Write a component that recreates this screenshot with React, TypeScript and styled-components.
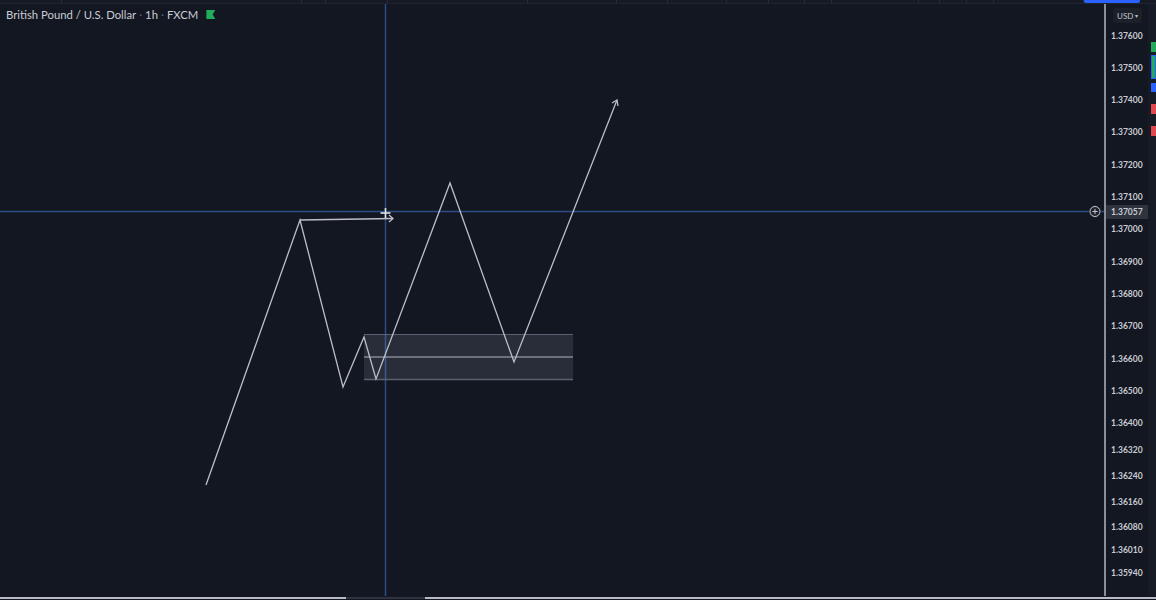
import { createGlobalStyle, styled } from "styled-components"

const Global = createGlobalStyle`
    html, body {
        margin: 0;
        padding: 0;
        background: #131722;
        overflow: hidden;
    }
    * { box-sizing: border-box; }
`

const Screen = styled.div`
    width: 1156px;
    height: 600px;
    display: grid;
    grid-template-rows: 4px 1fr 4px;
    background: #131722;
    font-family: Lato, "Liberation Sans", sans-serif;
    color: #d1d4dc;
`

const TopStrip = styled.div`
    display: flex;
    background: #161a25;
    border-bottom: 1px solid #1f2430;
`

const TopCell = styled.div<{ $w: number }>`
    width: ${p => p.$w}px;
    border-right: 1px solid #262b37;
`

const TopActive = styled.div`
    width: 56px;
    background: #2962ff;
    border-radius: 0 0 2px 2px;
`

const Body = styled.div`
    display: grid;
    grid-template-columns: 1104px 44px 8px;
    min-height: 0;
`

const Pane = styled.div`
    position: relative;
    overflow: hidden;
`

const Legend = styled.div`
    position: absolute;
    left: 6px;
    top: 4px;
    display: flex;
    align-items: center;
    gap: 3px;
    font-size: 11.3px;
    color: #c9ccd4;
`

const Dot = styled.span`
    color: #5d6272;
`

const Flag = styled.span`
    width: 9px;
    height: 9px;
    margin-left: 5px;
    background: #22ab5a;
    clip-path: polygon(0 0, 100% 0, 70% 50%, 100% 100%, 0 100%);
`

const Axis = styled.div`
    position: relative;
    border-left: 2px solid #8a8e97;
    background: #131722;
`

const CurrencyButton = styled.div`
    position: absolute;
    top: 4px;
    left: 7px;
    height: 15px;
    padding: 0 4px;
    display: flex;
    align-items: center;
    gap: 2px;
    border-radius: 3px;
    background: #1c2029;
    font-size: 8px;
    color: #c0c3cb;
`

const Tick = styled.div<{ $active?: boolean }>`
    position: absolute;
    left: 0;
    right: 0;
    height: 14px;
    display: flex;
    align-items: center;
    padding-left: 5px;
    font-size: 8.5px;
    font-weight: 700;
    color: #c8cbd3;
    background: ${p => (p.$active ? "#2f333e" : "transparent")};
`

const Side = styled.div`
    position: relative;
    background: #171b26;
`

const Marker = styled.div<{ $color: string; $outline?: boolean }>`
    position: absolute;
    left: 3px;
    right: 0;
    background: ${p => p.$color};
    border: ${p => (p.$outline ? "1px solid #2962ff" : "none")};
`

const BottomStrip = styled.div`
    display: flex;
    align-items: center;
    background: #131722;
`

const Track = styled.div<{ $w: number; $dark?: boolean }>`
    width: ${p => p.$w}px;
    height: 2px;
    background: ${p => (p.$dark ? "#2e333f" : "#b9bcc3")};
`

const ticks: { label: string; y: number; active?: boolean }[] = [
    { label: "1.37600", y: 32 },
    { label: "1.37500", y: 64 },
    { label: "1.37400", y: 96 },
    { label: "1.37300", y: 128 },
    { label: "1.37200", y: 161 },
    { label: "1.37100", y: 193 },
    { label: "1.37057", y: 208, active: true },
    { label: "1.37000", y: 225 },
    { label: "1.36900", y: 258 },
    { label: "1.36800", y: 290 },
    { label: "1.36700", y: 322 },
    { label: "1.36600", y: 355 },
    { label: "1.36500", y: 387 },
    { label: "1.36400", y: 419 },
    { label: "1.36320", y: 446 },
    { label: "1.36240", y: 472 },
    { label: "1.36160", y: 498 },
    { label: "1.36080", y: 523 },
    { label: "1.36010", y: 546 },
    { label: "1.35940", y: 569 },
]

const markers = [
    { color: "#22ab5a", y: 38, h: 10 },
    { color: "#22ab5a", y: 51, h: 24, outline: true },
    { color: "#2962ff", y: 79, h: 9 },
    { color: "#e0484d", y: 100, h: 10 },
    { color: "#e0484d", y: 122, h: 10 },
]

const path = [
    [206, 481], [300, 216], [343, 383], [364, 333], [376, 375],
    [450, 179], [514, 358], [617, 96],
]

const LINE = "#bcbfc7"
const CROSS = "#2c4e86"

export default function App() {
    const pts = path.map(p => p.join(",")).join(" ")
    return (
        <>
            <Global />
            <Screen>
                <TopStrip>
                    <TopCell $w={62} />
                    <TopCell $w={240} />
                    <TopCell $w={24} />
                    <TopCell $w={62} />
                    <TopCell $w={140} />
                    <TopCell $w={89} />
                    <TopCell $w={51} />
                    <TopCell $w={59} />
                    <TopCell $w={42} />
                    <TopCell $w={36} />
                    <TopCell $w={27} />
                    <TopCell $w={87} />
                    <TopCell $w={21} />
                    <TopCell $w={27} />
                    <TopCell $w={27} />
                    <TopCell $w={90} />
                    <TopActive />
                </TopStrip>
                <Body>
                    <Pane>
                        <svg width="1104" height="592" style={{ display: "block" }}>
                            <line x1="385.5" y1="0" x2="385.5" y2="592" stroke={CROSS} strokeWidth="1.5" />
                            <line x1="0" y1="207.5" x2="1104" y2="207.5" stroke={CROSS} strokeWidth="1.5" />
                            <rect x="364" y="330" width="209" height="46" fill="#8a93a6" fillOpacity="0.18" />
                            <line x1="364" y1="330.5" x2="573" y2="330.5" stroke="#5b6170" strokeWidth="1" />
                            <line x1="364" y1="375.5" x2="573" y2="375.5" stroke="#5b6170" strokeWidth="1.5" />
                            <line x1="364" y1="353" x2="573" y2="353" stroke="#b0b4be" strokeWidth="1.2" />
                            <polyline points={pts} fill="none" stroke={LINE} strokeWidth="1.3" />
                            <polyline points="612,99 617,96 618,102" fill="none" stroke={LINE} strokeWidth="1.3" />
                            <line x1="300" y1="216" x2="393" y2="214.5" stroke={LINE} strokeWidth="1.3" />
                            <polyline points="389,211 393,214.5 389,218" fill="none" stroke={LINE} strokeWidth="1.3" />
                            <g stroke="#dfe2e8" strokeWidth="1.6">
                                <line x1="385.5" y1="204" x2="385.5" y2="214" />
                                <line x1="380.5" y1="209" x2="390.5" y2="209" />
                            </g>
                            <g transform="translate(1095,207.5)">
                                <circle r="6.5" fill="#1e222d" />
                                <circle r="5" fill="none" stroke="#c5c8d0" strokeWidth="1" />
                                <line x1="-2.6" y1="0" x2="2.6" y2="0" stroke="#c5c8d0" strokeWidth="1" />
                                <line x1="0" y1="-2.6" x2="0" y2="2.6" stroke="#c5c8d0" strokeWidth="1" />
                            </g>
                        </svg>
                        <Legend>
                            <span>British Pound / U.S. Dollar</span>
                            <Dot>·</Dot>
                            <span>1h</span>
                            <Dot>·</Dot>
                            <span>FXCM</span>
                            <Flag />
                        </Legend>
                    </Pane>
                    <Axis>
                        <CurrencyButton>USD <span style={{ fontSize: 6 }}>▾</span></CurrencyButton>
                        {ticks.map(t => (
                            <Tick key={t.label} $active={t.active} style={{ top: t.y - 7 }}>
                                {t.label}
                            </Tick>
                        ))}
                    </Axis>
                    <Side>
                        {markers.map((m, i) => (
                            <Marker key={i} $color={m.color} $outline={m.outline} style={{ top: m.y, height: m.h }} />
                        ))}
                    </Side>
                </Body>
                <BottomStrip>
                    <Track $w={346} />
                    <Track $w={79} $dark />
                    <Track $w={731} />
                </BottomStrip>
            </Screen>
        </>
    )
}
